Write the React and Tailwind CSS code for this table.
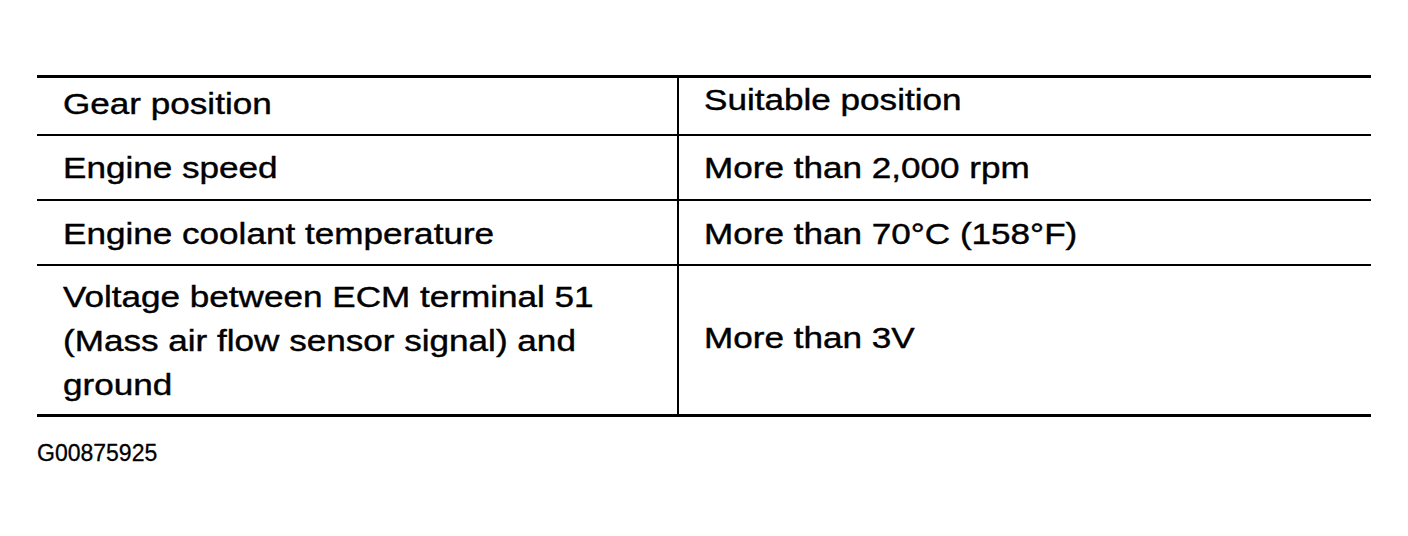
export default function App() {
  const font = { fontFamily: '"Liberation Sans", Arial, sans-serif' };
  const T = ({ children }) => (
    <div className="whitespace-nowrap text-[29px] leading-[44px] text-black origin-left scale-x-121 [-webkit-text-stroke:0.4px_black]">
      {children}
    </div>
  );
  return (
    <div className="w-[1408px] h-[536px] bg-white pt-[75px] pl-[37px]" style={font}>
      <div className="w-[1334px] border-t-[3px] border-b-[3px] border-black">
        <div className="grid grid-cols-[640px_1fr] h-[58px] border-b-2 border-black">
          <div className="flex items-center pl-[26px] pb-[9px]">
            <T>Gear position</T>
          </div>
          <div className="flex items-center border-l-2 border-black pl-[25px] pb-[16px]">
            <T>Suitable position</T>
          </div>
        </div>
        <div className="grid grid-cols-[640px_1fr] h-[65px] border-b-2 border-black">
          <div className="flex items-center pl-[26px]">
            <T>Engine speed</T>
          </div>
          <div className="flex items-center border-l-2 border-black pl-[25px]">
            <T>More than 2,000 rpm</T>
          </div>
        </div>
        <div className="grid grid-cols-[640px_1fr] h-[65px] border-b-2 border-black">
          <div className="flex items-center pl-[26px] pt-[3px]">
            <T>Engine coolant temperature</T>
          </div>
          <div className="flex items-center border-l-2 border-black pl-[25px] pt-[3px]">
            <T>More than 70°C (158°F)</T>
          </div>
        </div>
        <div className="grid grid-cols-[640px_1fr] h-[148px]">
          <div className="flex flex-col justify-center pl-[26px] pt-[2px]">
            <T>Voltage between ECM terminal 51</T>
            <T>(Mass air flow sensor signal) and</T>
            <T>ground</T>
          </div>
          <div className="flex items-center border-l-2 border-black pl-[25px] pb-[5px]">
            <T>More than 3V</T>
          </div>
        </div>
      </div>
      <div className="mt-[23px] text-[23px] leading-[26px] text-black [-webkit-text-stroke:0.3px_black]">G00875925</div>
    </div>
  );
}
